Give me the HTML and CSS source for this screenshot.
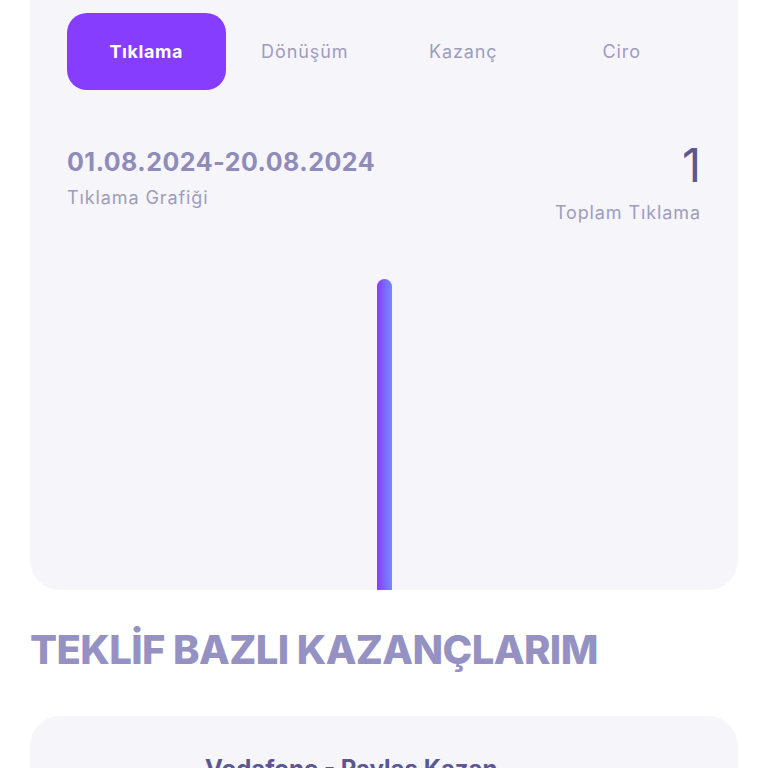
FILE: index.html
```html
<!DOCTYPE html>
<html lang="tr">
<head>
    <meta charset="UTF-8">
    <link rel="stylesheet" href="styles.css">
</head>
<body>
    <!-- tıklama grafiği kartı -->
    <div class="stats-card">
        <div class="tabs">
            <button class="tab active">Tıklama</button>
            <button class="tab">Dönüşüm</button>
            <button class="tab">Kazanç</button>
            <button class="tab">Ciro</button>
        </div>

        <div class="stats-head">
            <div class="period">
                <div class="period-date">01.08.2024-20.08.2024</div>
                <div class="period-label">Tıklama Grafiği</div>
            </div>
            <div class="total">
                <div class="total-value">1</div>
                <div class="total-label">Toplam Tıklama</div>
            </div>
        </div>

        <div class="chart">
            <div class="bar"></div>
        </div>
    </div>

    <h2 class="section-title">TEKLİF BAZLI KAZANÇLARIM</h2>

    <div class="offer-card">
        <div class="offer-name">Vodafone - Paylaş Kazan</div>
    </div>
</body>
</html>
```

FILE: styles.css
```css
body {
    margin: 0;
    padding: 0;
    background: #ffffff;
    font-family: 'Inter', 'Noto Sans', sans-serif;
    overflow: hidden;
}

.stats-card {
    margin: -30px 30px 0;
    padding: 43px 37px 0;
    background: #f6f5fa;
    border-radius: 0 0 30px 30px;
}

.tabs {
    display: grid;
    grid-template-columns: repeat(4, 1fr);
}

.tab {
    height: 77px;
    border: none;
    background: transparent;
    border-radius: 20px;
    font-family: inherit;
    font-size: 18px;
    color: #9e9cbd;
    letter-spacing: 0.9px;
    padding-bottom: 2px;
}

.tab.active {
    background: #873dfd;
    color: #ffffff;
    font-weight: 700;
    letter-spacing: 0.6px;
}

.stats-head {
    display: flex;
    justify-content: space-between;
    margin-top: 57px;
}

.period-date {
    font-size: 25px;
    font-weight: 700;
    color: #8f8cb9;
    line-height: 1.2;
    letter-spacing: 0.5px;
}

.period-label {
    margin-top: 10px;
    font-size: 18px;
    color: #9e9cbd;
    letter-spacing: 0.9px;
}

.total {
    text-align: right;
}

.total-value {
    font-size: 47px;
    font-weight: 400;
    color: #5b5891;
    line-height: 1;
    margin-top: -6px;
}

.total-label {
    margin-top: 14px;
    font-size: 18px;
    color: #9e9cbd;
    letter-spacing: 0.9px;
}

.chart {
    height: 311px;
    margin-top: 56px;
    display: flex;
    justify-content: center;
    align-items: flex-end;
}

.bar {
    width: 15px;
    height: 100%;
    border-radius: 8px 8px 0 0;
    background: linear-gradient(90deg, #8a3cfb, #6f8dff);
}

.section-title {
    margin: 36px 30px 0;
    font-size: 40px;
    font-weight: 800;
    color: #9592c3;
    letter-spacing: -0.6px;
    line-height: 1.2;
}

.offer-card {
    margin: 42px 30px 0;
    height: 120px;
    background: #f6f5fa;
    border-radius: 30px;
    padding-top: 38px;
    box-sizing: border-box;
}

.offer-name {
    padding-left: 175px;
    font-size: 24px;
    font-weight: 700;
    color: #5b5891;
}
```
